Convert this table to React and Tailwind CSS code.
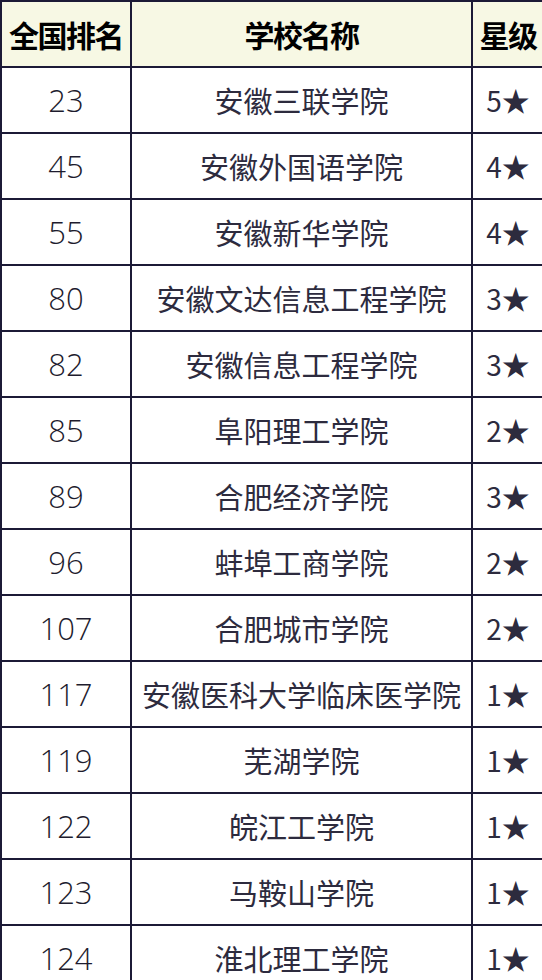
import React from 'react';

const rows = [
  ['23', '安徽三联学院', '5'],
  ['45', '安徽外国语学院', '4'],
  ['55', '安徽新华学院', '4'],
  ['80', '安徽文达信息工程学院', '3'],
  ['82', '安徽信息工程学院', '3'],
  ['85', '阜阳理工学院', '2'],
  ['89', '合肥经济学院', '3'],
  ['96', '蚌埠工商学院', '2'],
  ['107', '合肥城市学院', '2'],
  ['117', '安徽医科大学临床医学院', '1'],
  ['119', '芜湖学院', '1'],
  ['122', '皖江工学院', '1'],
  ['123', '马鞍山学院', '1'],
  ['124', '淮北理工学院', '1'],
];

const cell = 'border-2 border-[#1c1a36] text-center align-middle p-0 h-[66px]';

const App = () => {
  return (
    <div className="w-[542px] h-[980px] overflow-hidden bg-white font-['Noto_Sans_CJK_SC',sans-serif]">
      <table className="border-collapse table-fixed w-[543px] text-[#2d2b3e]">
        <colgroup>
          <col className="w-[130px]" />
          <col className="w-[341px]" />
          <col className="w-[72px]" />
        </colgroup>
        <thead>
          <tr className="bg-[#f7f8e4] text-black font-bold text-[30px] tracking-[-1.5px]">
            <th className={cell}>全国排名</th>
            <th className={cell}>学校名称</th>
            <th className={cell}>星级</th>
          </tr>
        </thead>
        <tbody className="text-[29px] leading-none">
          {rows.map(([rank, name, star]) => (
            <tr key={rank}>
              <td className={`${cell} font-['Open_Sans',sans-serif] font-light text-[31px] text-[#1e1c2e] pt-[1px]`}>{rank}</td>
              <td className={`${cell} whitespace-nowrap`}>{name}</td>
              <td className={`${cell} whitespace-nowrap text-[28px]`}>{star}★</td>
            </tr>
          ))}
        </tbody>
      </table>
    </div>
  );
};

export default App;
